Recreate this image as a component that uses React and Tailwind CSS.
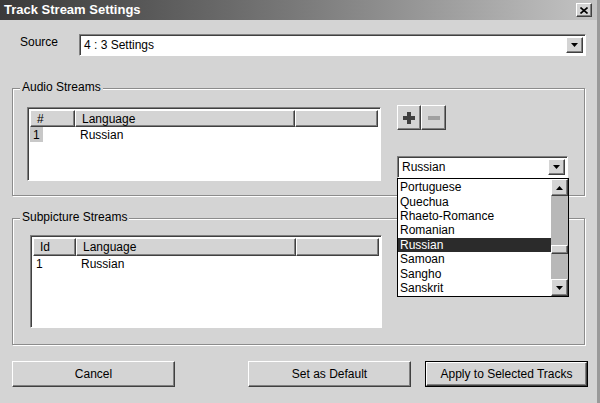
import React from 'react';

const font = { fontFamily: '"Liberation Sans", Arial, sans-serif' };

const sunken =
  'border border-t-[#808080] border-l-[#808080] border-b-white border-r-white shadow-[inset_1px_1px_0_#404040]';
const raised =
  'border border-t-white border-l-white border-b-[#404040] border-r-[#404040] shadow-[inset_-1px_-1px_0_#808080]';

const Arrow = ({ up }) => (
  <svg width="7" height="4" viewBox="0 0 7 4">
    <path d={up ? 'M3.5 0 L7 4 L0 4 Z' : 'M0 0 L7 0 L3.5 4 Z'} fill="#000" />
  </svg>
);

const ArrowButton = ({ up, className = '' }) => (
  <div className={`bg-[#d4d4d4] flex items-center justify-center ${raised} ${className}`}>
    <Arrow up={up} />
  </div>
);

const Combo = ({ value, className = '' }) => (
  <div className={`bg-white flex items-center p-[2px] pl-[4px] ${sunken} ${className}`}>
    <span className="flex-1 text-[12px] leading-none text-black">{value}</span>
    <ArrowButton className="w-[17px] h-full" />
  </div>
);

const GroupBox = ({ label, className = '', children }) => (
  <div className={`relative border border-[#8c8c8c] shadow-[inset_1px_1px_0_#fff,1px_1px_0_#fff] ${className}`}>
    <span className="absolute -top-[9px] left-[7px] bg-[#d4d4d4] px-[2px] text-[12px] leading-[15px]">
      {label}
    </span>
    {children}
  </div>
);

const HeaderCell = ({ children, className = '' }) => (
  <div className={`h-full flex items-center pl-[6px] text-[12px] bg-[#d4d4d4] ${raised} ${className}`}>
    {children}
  </div>
);

const ListView = ({ first, firstW, rowLabel, highlight, headerH, className = '' }) => (
  <div className={`bg-white flex flex-col p-[2px] ${sunken} ${className}`}>
    <div className={`flex shrink-0 ${headerH}`}>
      <HeaderCell className={firstW}>{first}</HeaderCell>
      <HeaderCell className="w-[220px]">Language</HeaderCell>
      <HeaderCell className="flex-1" />
    </div>
    <div className="flex h-[15px] items-center text-[12px]">
      <div className={`${firstW} h-full flex items-center`}>
        <span className={`px-[3px] h-full flex items-center ${highlight ? 'bg-[#c8c8c8]' : ''}`}>{rowLabel}</span>
      </div>
      <span className="pl-[5px]">Russian</span>
    </div>
  </div>
);

const languages = ['Portuguese', 'Quechua', 'Rhaeto-Romance', 'Romanian', 'Russian', 'Samoan', 'Sangho', 'Sanskrit'];

const DropList = () => (
  <div className="absolute left-0 top-full w-[172px] h-[119px] bg-white border border-black flex z-10">
    <div className="flex-1 flex flex-col pt-[1px]">
      {languages.map((l) => (
        <div
          key={l}
          className={`h-[14.4px] flex items-center pl-[2px] text-[12px] ${
            l === 'Russian' ? 'bg-[#2b2b2b] text-white' : 'text-black'
          }`}
        >
          {l}
        </div>
      ))}
    </div>
    <div className="w-[17px] flex flex-col bg-[#b8b8b8]">
      <ArrowButton up className="h-[17px] w-full" />
      <div className="h-[49px]" />
      <div className={`h-[9px] bg-[#d4d4d4] ${raised}`} />
      <div className="flex-1" />
      <ArrowButton className="h-[17px] w-full" />
    </div>
  </div>
);

const Button = ({ children, isDefault, className = '' }) => (
  <div className={`h-[26px] ${isDefault ? 'border border-black' : ''} ${className}`}>
    <div className={`h-full flex items-center justify-center text-[12px] bg-[#d4d4d4] ${raised}`}>
      {children}
    </div>
  </div>
);

export default function App() {
  return (
    <div className="w-[600px] h-[403px] bg-[#d4d4d4] text-black flex flex-col overflow-hidden border-r-[3px] border-r-[#9a9a9a]" style={font}>
      <div className="h-[20px] shrink-0 flex items-center justify-between pl-[4px] pr-[5px] bg-gradient-to-r from-[#3a3a3a] via-[#7a7a7a] to-[#c4c4c4]">
        <span className="text-white font-bold text-[13px]">Track Stream Settings</span>
        <div className={`w-[16px] h-[14px] bg-[#d4d4d4] flex items-center justify-center ${raised}`}>
          <svg width="8" height="7" viewBox="0 0 8 7">
            <path d="M0.5 0.5 L7.5 6.5 M7.5 0.5 L0.5 6.5" stroke="#000" strokeWidth="1.6" />
          </svg>
        </div>
      </div>

      <div className="flex items-center mt-[14px] pl-[20px]">
        <span className="w-[59px] text-[12px] -mt-[6px]">Source</span>
        <Combo value="4 : 3 Settings" className="w-[507px] h-[22px]" />
      </div>

      <GroupBox label="Audio Streams" className="mt-[32px] ml-[12px] w-[573px] h-[108px]">
        <div className="flex pl-[14px] pt-[18px]">
          <ListView first="#" firstW="w-[45px]" rowLabel="1" highlight headerH="h-[17px]" className="w-[354px] h-[74px]" />
          <div className="ml-[16px] flex flex-col -mt-[2px]">
            <div className="flex">
              <div className={`w-[24px] h-[25px] bg-[#d4d4d4] flex items-center justify-center ${raised}`}>
                <svg width="12" height="12" viewBox="0 0 12 12">
                  <path d="M4 0h4v4h4v4H8v4H4V8H0V4h4z" fill="#404040" />
                </svg>
              </div>
              <div className={`w-[25px] h-[25px] bg-[#d4d4d4] flex items-center justify-center ${raised}`}>
                <svg width="12" height="4" viewBox="0 0 12 4">
                  <rect width="12" height="4" fill="#a0a0a0" />
                </svg>
              </div>
            </div>
            <div className="relative mt-[26px]">
              <Combo value="Russian" className="w-[171px] h-[22px]" />
              <DropList />
            </div>
          </div>
        </div>
      </GroupBox>

      <GroupBox label="Subpicture Streams" className="mt-[22px] ml-[12px] w-[573px] h-[127px]">
        <div className="pl-[17px] pt-[16px]">
          <ListView first="Id" firstW="w-[43px]" rowLabel="1" headerH="h-[18px]" className="w-[352px] h-[93px]" />
        </div>
      </GroupBox>

      <div className="flex mt-[16px] pl-[12px]">
        <Button className="w-[163px]">Cancel</Button>
        <Button className="w-[163px] ml-[73px]">Set as Default</Button>
        <Button isDefault className="w-[163px] ml-[14px]">Apply to Selected Tracks</Button>
      </div>
    </div>
  );
}
